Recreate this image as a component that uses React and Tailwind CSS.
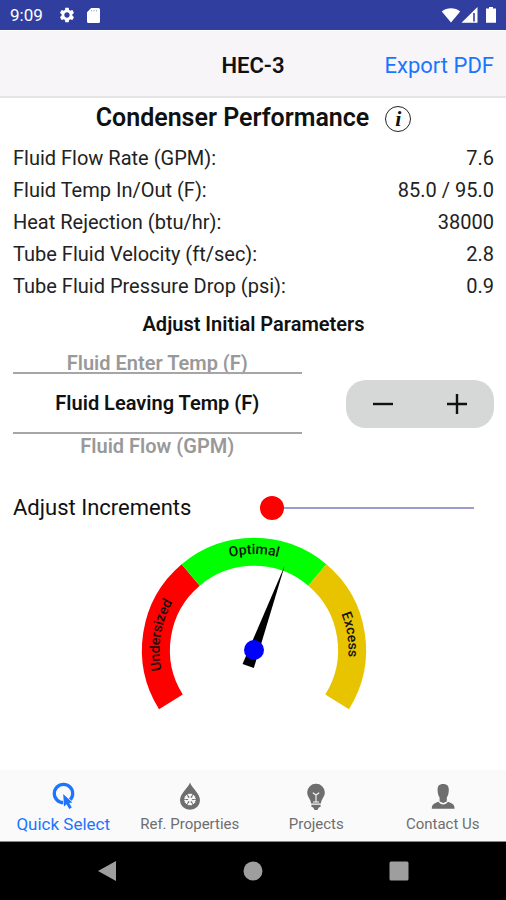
import React, { useState } from 'react';
import { MdSettings } from 'react-icons/md';

const results = [
  { label: 'Fluid Flow Rate (GPM):', value: '7.6' },
  { label: 'Fluid Temp In/Out (F):', value: '85.0 / 95.0' },
  { label: 'Heat Rejection (btu/hr):', value: '38000' },
  { label: 'Tube Fluid Velocity (ft/sec):', value: '2.8' },
  { label: 'Tube Fluid Pressure Drop (psi):', value: '0.9' },
];

const tabs = [
  { title: 'Quick Select', icon: <QuickSelectIcon />, active: true },
  { title: 'Ref. Properties', icon: <DropIcon /> },
  { title: 'Projects', icon: <BulbIcon /> },
  { title: 'Contact Us', icon: <PersonIcon /> },
];

function QuickSelectIcon() {
  return (
    <svg width="28" height="28" viewBox="0 0 28 28" aria-hidden="true">
      <circle cx="14.5" cy="11.5" r="9.2" fill="none" stroke="currentColor" strokeWidth="3.2" />
      <path d="M14.2 12 23.4 20.4 20.2 21 22.8 25.6 20.2 27 17.6 22.2 15 24.6Z" fill="currentColor" stroke="#fafafa" strokeWidth="1.2" paintOrder="stroke" />
    </svg>
  );
}

function DropIcon() {
  return (
    <svg width="28" height="28" viewBox="0 0 28 28" aria-hidden="true">
      <path d="M14 0.5C15.5 5.5 24 11.5 24 18.3A10 9.4 0 0 1 4 18.3C4 11.5 12.5 5.5 14 .5Z" fill="currentColor" />
      <g stroke="#fafafa" strokeWidth="1.5" strokeLinecap="round">
        {[0, 60, 120, 180, 240, 300].map((deg) => (
          <path key={deg} d="M14 17.5V12.2M12.4 12.6 14 14.3 15.6 12.6" fill="none" transform={`rotate(${deg} 14 17.5)`} />
        ))}
      </g>
    </svg>
  );
}

function BulbIcon() {
  return (
    <svg width="28" height="28" viewBox="0 0 28 28" aria-hidden="true">
      <path d="M14 1.8A8.6 8.6 0 0 1 22.8 10.2C22.8 15 19.2 17 18.9 21.6H9.1C8.8 17 5.2 15 5.2 10.2A8.6 8.6 0 0 1 14 1.8Z" fill="currentColor" />
      <path d="M9.4 22.8H18.6V24.8L16.8 25.6 15.4 28H12.6L11.2 25.6 9.4 24.8Z" fill="currentColor" />
      <path d="M10.8 10.8 14 13 17.2 10.8M14 13V20M11 20H17" fill="none" stroke="#fafafa" strokeWidth="1.1" />
    </svg>
  );
}

function PersonIcon() {
  return (
    <svg width="28" height="28" viewBox="0 0 28 28" aria-hidden="true">
      <path d="M14.2 2C18.4 2 20 4.2 19.8 8.4 19.7 11.6 18.8 14 17.8 15.6V19.4L14.2 21 10.6 19.4V15.6C9.6 14 8.7 11.6 8.6 8.4 8.4 4.2 10 2 14.2 2Z" fill="currentColor" />
      <path d="M2.8 26.8C2.8 22.6 5 21.4 9.6 19.8 10.6 21.6 12.2 22.4 14.2 22.4S17.8 21.6 18.8 19.8C23.4 21.4 25.6 22.6 25.6 26.8Z" fill="currentColor" />
    </svg>
  );
}

function StatusBar() {
  return (
    <div className="flex h-[30px] items-center justify-between bg-[#303f9f] pl-2.5 pr-2 text-white">
      <div className="flex items-center">
        <span className="w-12 text-[17px] leading-5">9:09</span>
        <MdSettings size={18} />
        <svg className="ml-2.5" width="15" height="17" viewBox="0 0 15 17" aria-hidden="true">
          <path d="M5.2 1H12.5A1.5 1.5 0 0 1 14 2.5V14.5A1.5 1.5 0 0 1 12.5 16H2.5A1.5 1.5 0 0 1 1 14.5V5.2Z" fill="currentColor" />
          <path d="M5.5 3V4.5M8 3V4.5M10.5 3V4.5" stroke="#a9b0da" strokeWidth="1" />
        </svg>
      </div>
      <div className="flex items-center">
        <svg width="20" height="18" viewBox="0 0 20 18" aria-hidden="true">
          <path d="M10 16.5 .8 5.4A14.6 14.6 0 0 1 19.2 5.4Z" fill="currentColor" />
        </svg>
        <svg width="17" height="18" viewBox="0 0 17 18" aria-hidden="true">
          <path d="M.5 16.8 16.5 1V16.8Z" fill="currentColor" />
          <path d="M13 7V15.4" stroke="#303f9f" strokeWidth="1.6" />
        </svg>
        <svg className="ml-1.5" width="14" height="18" viewBox="0 0 14 18" aria-hidden="true">
          <path d="M5 1H9V2.6H12V16.8H2V2.6H5Z" fill="currentColor" />
        </svg>
      </div>
    </div>
  );
}

// Dial centre is (125, 120), ring goes from r=84 to r=112
function Gauge({ angle }) {
  return (
    <svg className="mx-auto block" width="250" height="190" viewBox="0 0 250 190" role="img" aria-label="Condenser sizing gauge">
      <defs>
        <path id="arc-undersized" d="M44.4 169.4A94.5 94.5 0 0 1 64 48" />
        <path id="arc-optimal" d="M52.7 56.8A96 96 0 0 1 197.3 56.8" />
        <path id="arc-excess" d="M186 48A94.5 94.5 0 0 1 205.6 169.4" />
      </defs>
      <g fill="none" strokeWidth="28">
        <path d="M41.9 171.9A98 98 0 0 1 61.7 45" stroke="#ff0000" />
        <path d="M61.7 45A98 98 0 0 1 188.3 45" stroke="#00ff00" />
        <path d="M188.3 45A98 98 0 0 1 208.1 171.9" stroke="#e8c400" />
      </g>
      <g className="text-sm font-medium" fill="#111111" textAnchor="middle">
        <text><textPath href="#arc-undersized" startOffset="50%">Undersized</textPath></text>
        <text><textPath href="#arc-optimal" startOffset="50%">Optimal</textPath></text>
        <text><textPath href="#arc-excess" startOffset="50%">Excess</textPath></text>
      </g>
      <path d="M125 30 131 137H119Z" fill="#000000" transform={`rotate(${angle} 125 120)`} />
      <circle cx="125" cy="120" r="10" fill="#0000ff" />
    </svg>
  );
}

export default function App() {
  const [increment, setIncrement] = useState(0);

  return (
    <div className="flex min-h-screen flex-col bg-white font-['Roboto',sans-serif] text-[#111111]">
      <StatusBar />

      {/* Header */}
      <header className="mt-px grid h-[67px] grid-cols-3 items-center border-b-2 border-[#e6e4e7] bg-[#f7f5f8] px-3 pt-1">
        <h1 className="col-start-2 text-center text-[22px] leading-7 font-semibold">HEC-3</h1>
        <button className="justify-self-end text-[22px] leading-7 whitespace-nowrap text-[#1a75ff]">Export PDF</button>
      </header>

      <main className="flex flex-col pr-3 pl-[13px]">
        <div className="flex items-center justify-center gap-4 pt-1">
          <h2 className="text-[25px] leading-8 font-semibold">Condenser Performance</h2>
          <button
            aria-label="Info"
            className="mt-0.5 flex size-[26px] items-center justify-center rounded-full border border-[#222222] font-['Liberation_Serif',serif] text-[22px] leading-5 font-bold italic"
          >
            i
          </button>
        </div>

        <dl className="mt-2 text-xl leading-8 text-[#222222]">
          {results.map((row) => (
            <div key={row.label} className="flex justify-between">
              <dt>{row.label}</dt>
              <dd>{row.value}</dd>
            </div>
          ))}
        </dl>

        <h3 className="mt-2 text-center text-xl leading-7 font-semibold">Adjust Initial Parameters</h3>

        {/* Parameter picker and stepper */}
        <div className="mt-3 flex items-center justify-between">
          <div role="listbox" aria-label="Parameter" className="flex w-3/5 flex-col text-center text-xl font-semibold">
            <button role="option" aria-selected="false" className="h-[22px] leading-[26px] text-[#999999]">Fluid Enter Temp (F)</button>
            <button role="option" aria-selected="true" className="h-[62px] border-y-2 border-[#a6a6a6]">Fluid Leaving Temp (F)</button>
            <button role="option" aria-selected="false" className="h-6 leading-5 text-[#999999]">Fluid Flow (GPM)</button>
          </div>
          <div className="flex h-12 w-[148px] rounded-[20px] bg-[#d6d8d7]">
            <button aria-label="Decrease" className="flex flex-1 items-center justify-center">
              <svg width="20" height="20" viewBox="0 0 20 20"><path d="M0 10H20" stroke="#111111" strokeWidth="2.4" /></svg>
            </button>
            <button aria-label="Increase" className="flex flex-1 items-center justify-center">
              <svg width="20" height="20" viewBox="0 0 20 20"><path d="M0 10H20M10 0V20" stroke="#111111" strokeWidth="2.4" /></svg>
            </button>
          </div>
        </div>

        <div className="mt-7 flex items-center justify-between pr-5">
          <label htmlFor="increment" className="text-[22px] leading-11">Adjust Increments</label>
          <input
            id="increment"
            type="range"
            min="0"
            max="10"
            value={increment}
            onChange={(e) => setIncrement(Number(e.target.value))}
            className="h-6 w-[214px] appearance-none bg-transparent [&::-webkit-slider-runnable-track]:h-0.5 [&::-webkit-slider-runnable-track]:bg-[#9d9bcf] [&::-webkit-slider-thumb]:-mt-[11px] [&::-webkit-slider-thumb]:size-6 [&::-webkit-slider-thumb]:appearance-none [&::-webkit-slider-thumb]:rounded-full [&::-webkit-slider-thumb]:bg-[#ff0000]"
          />
        </div>

        <Gauge angle={20} />
      </main>

      {/* Bottom tabs */}
      <nav className="mt-auto grid h-[72px] grid-cols-4 border-b border-[#888888] bg-[#fafafa]">
        {tabs.map((tab) => (
          <button
            key={tab.title}
            className={`flex flex-col items-center pt-3 ${tab.active ? 'text-[17px] text-[#1a75ff]' : 'text-[15px] text-[#6e6e6e]'}`}
          >
            {tab.icon}
            <span className="leading-7 whitespace-nowrap">{tab.title}</span>
          </button>
        ))}
      </nav>

      <div className="flex h-[58px] items-center justify-center gap-[126px] bg-black text-[#9e9e9e]">
        <button aria-label="Back">
          <svg width="20" height="20" viewBox="0 0 20 20"><path d="M1 10 19 0V20Z" fill="currentColor" /></svg>
        </button>
        <button aria-label="Home">
          <svg width="20" height="20" viewBox="0 0 20 20"><circle cx="10" cy="10" r="9.5" fill="currentColor" /></svg>
        </button>
        <button aria-label="Recents">
          <svg width="20" height="20" viewBox="0 0 20 20"><rect x="0.5" y="0.5" width="19" height="19" rx="1.5" fill="currentColor" /></svg>
        </button>
      </div>
    </div>
  );
}
